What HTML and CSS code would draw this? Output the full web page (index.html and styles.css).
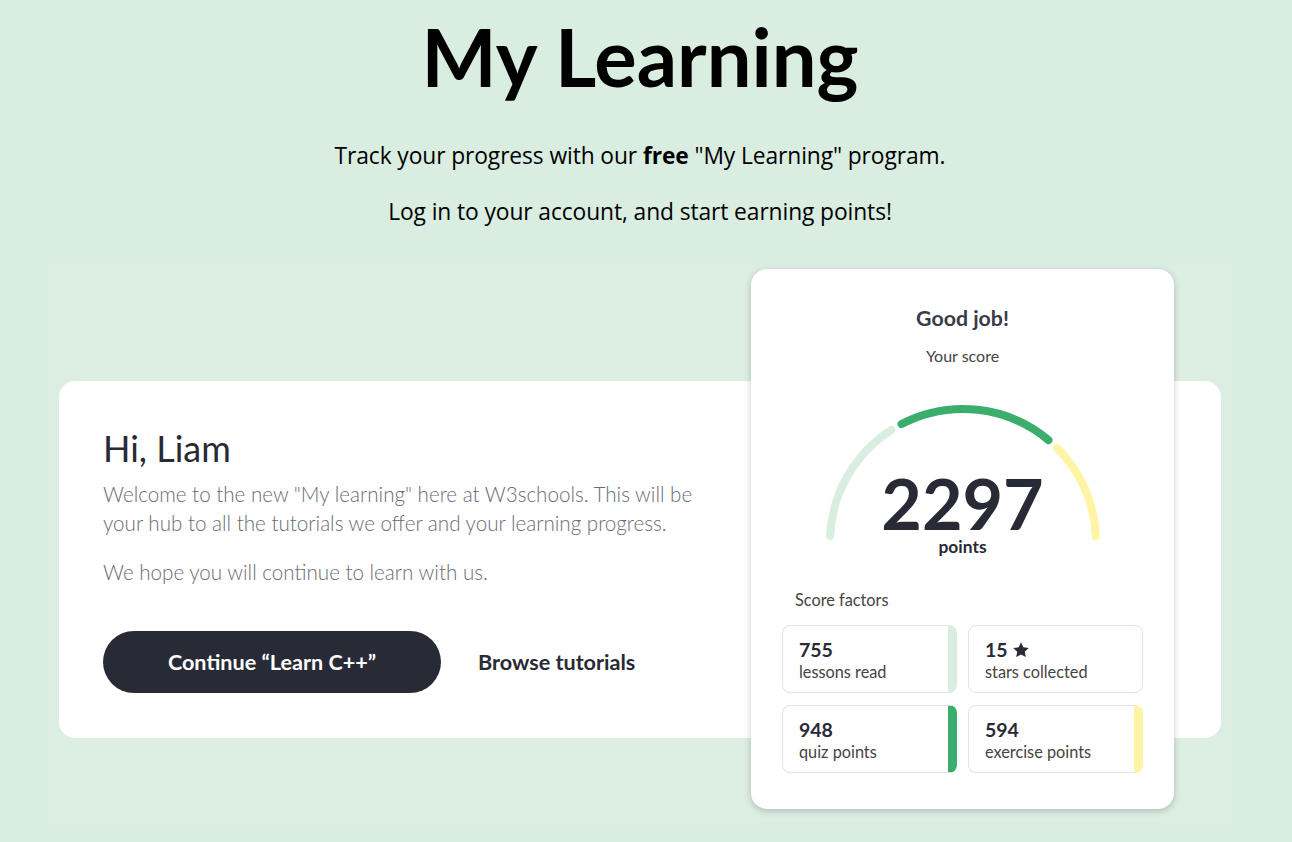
FILE: index.html
```html
<!DOCTYPE html>
<html lang="en">
<head>
<meta charset="utf-8">
<title>My Learning</title>
<link rel="stylesheet" href="styles.css">
</head>
<body>
<main class="page">
<header class="intro">
  <h1 class="intro-title">My Learning</h1>
  <p class="intro-text">Track your progress with our <b>free</b> "My Learning" program.</p>
  <p class="intro-text">Log in to your account, and start earning points!</p>
</header>

<section class="stage">
  <div class="welcome-card">
    <h2 class="welcome-title">Hi, Liam</h2>
    <p class="welcome-text">Welcome to the new "My learning" here at W3schools. This will be your hub to all the tutorials we offer and your learning progress.</p>
    <p class="welcome-text">We hope you will continue to learn with us.</p>
    <div class="actions">
      <a class="btn-continue" href="#">Continue “Learn C++”</a>
      <a class="btn-browse" href="#">Browse tutorials</a>
    </div>
  </div>

  <div class="score-card">
    <div class="score-head">Good job!</div>
    <div class="score-sub">Your score</div>
    <div class="gauge">
      <svg class="gauge-svg" width="290" height="150" viewBox="0 0 290 150" aria-hidden="true">
        <path d="M 12.13 136.20 A 133 133 0 0 1 73.54 29.83" fill="none" stroke="#d9eee1" stroke-width="8" stroke-linecap="round"/>
        <path d="M 83.59 24.03 A 133 133 0 0 1 230.49 40.12" fill="none" stroke="#3bad6c" stroke-width="8" stroke-linecap="round"/>
        <path d="M 239.05 47.95 A 133 133 0 0 1 277.87 136.20" fill="none" stroke="#fff4a3" stroke-width="8" stroke-linecap="round"/>
      </svg>
      <div class="gauge-value">
        <div class="gauge-number">2297</div>
        <div class="gauge-unit">points</div>
      </div>
    </div>
    <div class="factors-label">Score factors</div>
    <div class="factors">
      <div class="factor factor-light">
        <div class="factor-num">755</div>
        <div class="factor-name">lessons read</div>
      </div>
      <div class="factor">
        <div class="factor-num">15 <svg class="star" width="18" height="18" viewBox="0 0 24 24" aria-hidden="true"><path d="M12 1.8l3.1 6.6 7.2.9-5.3 5 1.4 7.1L12 17.9l-6.4 3.5 1.4-7.1-5.3-5 7.2-.9z" fill="#282a35"/></svg></div>
        <div class="factor-name">stars collected</div>
      </div>
      <div class="factor factor-green">
        <div class="factor-num">948</div>
        <div class="factor-name">quiz points</div>
      </div>
      <div class="factor factor-yellow">
        <div class="factor-num">594</div>
        <div class="factor-name">exercise points</div>
      </div>
    </div>
  </div>
</section>
</main>
</body>
</html>
```

FILE: styles.css
```css
* { box-sizing: border-box; }

body {
  margin: 0;
  background: #d9ede0;
  font-family: Lato, "Open Sans", sans-serif;
  color: #000;
}

.page {
  width: 1280px;
}

.intro {
  text-align: center;
  padding-top: 11px;
}

.intro-title {
  margin: 0;
  font-size: 79.5px;
  font-weight: 700;
  line-height: 92px;
  color: #000;
}

.intro-text {
  margin: 0;
  font-family: "Open Sans", Lato, sans-serif;
  font-size: 22.8px;
  font-weight: 500;
  line-height: 28px;
  margin-top: 28px;
  letter-spacing: -0.1px;
}
.intro-text:first-of-type { margin-top: 39px; }

.stage {
  margin: 36px 50px 0 50px;
  height: 560px;
  background: #dcede2;
  display: grid;
  grid-template-columns: 1fr;
  grid-template-rows: 1fr;
}

.welcome-card {
  grid-area: 1 / 1;
  align-self: start;
  margin: 119px 9px 0 9px;
  height: 357px;
  background: #fff;
  border-radius: 16px;
  padding: 44px 44px 0 44px;
  color: #282a35;
}

.welcome-title {
  margin: 0;
  font-size: 36px;
  font-weight: 400;
  line-height: 46px;
}

.welcome-text {
  margin: 9px 0 0;
  width: 610px;
  font-size: 20.6px;
  font-weight: 300;
  line-height: 29px;
  color: #6b6b73;
}
.welcome-text + .welcome-text { margin-top: 20px; }

.actions {
  display: flex;
  align-items: center;
  gap: 37px;
  margin-top: 44px;
}

.btn-continue {
  display: flex;
  align-items: center;
  justify-content: center;
  width: 338px;
  height: 62px;
  border-radius: 31px;
  background: #282a35;
  color: #fff;
  font-size: 21.6px;
  font-weight: 700;
  text-decoration: none;
}

.btn-browse {
  color: #282a35;
  font-size: 21.6px;
  font-weight: 700;
  text-decoration: none;
}

.score-card {
  grid-area: 1 / 1;
  justify-self: end;
  align-self: start;
  margin: 7px 56px 0 0;
  width: 423px;
  height: 540px;
  background: #fff;
  border-radius: 16px;
  box-shadow: 0 2px 6px rgba(40, 42, 53, 0.25);
  padding: 36px 31px 0;
  color: #282a35;
  display: flex;
  flex-direction: column;
}

.score-head {
  text-align: center;
  font-size: 21.3px;
  font-weight: 700;
  line-height: 26px;
  color: #3a3b45;
}

.score-sub {
  text-align: center;
  font-size: 16px;
  line-height: 20px;
  margin-top: 15px;
  color: #444;
}

.gauge {
  display: grid;
  justify-items: center;
  margin-top: 34px;
}

.gauge-svg { grid-area: 1 / 1; display: block; }

.gauge-value {
  grid-area: 1 / 1;
  align-self: end;
  text-align: center;
  margin-bottom: -6px;
}

.gauge-number {
  font-size: 70px;
  font-weight: 700;
  line-height: 68px;
  color: #282a35;
}

.gauge-unit {
  font-size: 17.4px;
  font-weight: 700;
  line-height: 18px;
  margin-top: 1px;
}

.factors-label {
  margin: 40px 0 0 13px;
  font-size: 16.3px;
  line-height: 20px;
  color: #444;
}

.factors {
  display: grid;
  grid-template-columns: 175px 175px;
  column-gap: 11px;
  row-gap: 12px;
  margin-top: 15px;
}

.factor {
  height: 68px;
  border: 1px solid #e2e3e6;
  border-radius: 8px;
  padding: 12px 16px 0;
}
.factor-light { border-right: 9px solid #d9eee1; }
.factor-green { border-right: 9px solid #3bad6c; }
.factor-yellow { border-right: 9px solid #fff4a3; }

.factor-num {
  display: flex;
  align-items: center;
  gap: 4px;
  font-size: 19.5px;
  font-weight: 700;
  line-height: 24px;
  color: #282a35;
}

.factor-name {
  font-size: 16.3px;
  line-height: 19px;
  color: #444;
}
```
